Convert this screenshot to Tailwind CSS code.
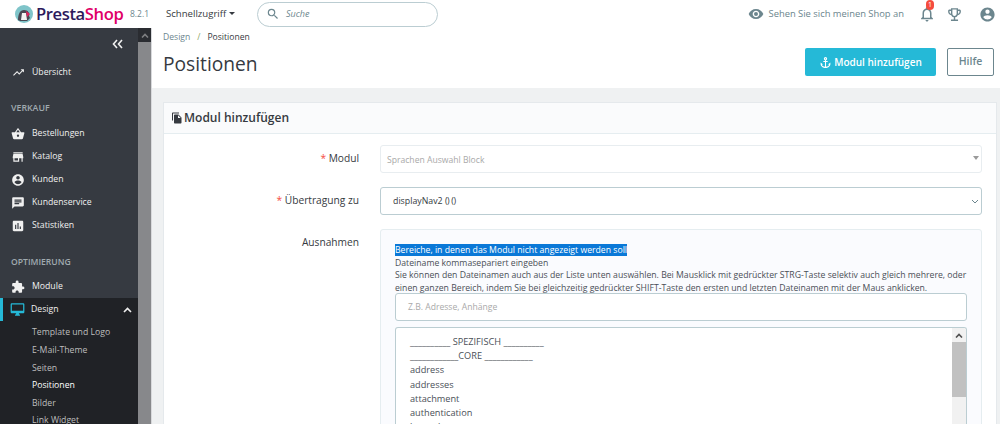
<!DOCTYPE html>
<html lang="de">
<head>
  <meta charset="UTF-8">
  <title>Positionen</title>
  <script src="https://cdn.jsdelivr.net/npm/@tailwindcss/browser@4"></script>
</head>
<body class="h-[424px] w-[1000px] overflow-hidden bg-white font-['Open_Sans',sans-serif] text-[#363a41]">
  <!-- top bar -->
  <header class="flex h-[28px] items-center">
    <div class="flex w-[163px] items-center pl-[15px]">
      <svg class="h-[18px] w-[18px] shrink-0" viewBox="0 0 18 18">
        <circle cx="9" cy="9" r="9" fill="#7fc4c9"/>
        <path d="M3 15c0-6 2-10 6-10s6 3 5 6l1 2-3 3H5z" fill="#4a4a55"/>
        <path d="M7 8h4l1 7H6z" fill="#f4f4f4"/>
        <path d="M11 6l4 3-3 3z" fill="#e0245e"/>
      </svg>
      <span class="ml-[3px] w-[91px] text-[16.6px] leading-[28px] font-semibold tracking-[-0.4px] whitespace-nowrap"><span class="text-[#2d1a5c]">Presta</span><span class="text-[#df0067]">Shop</span></span>
      <span class="ml-[3px] text-[8.5px] whitespace-nowrap text-[#6c868e]">8.2.1</span>
    </div>
    <div class="ml-[3px] flex w-[91px] items-center text-[9.6px] text-[#363a41]">
      <span>Schnellzugriff</span>
      <span class="ml-[3px] h-0 w-0 border-x-[3.5px] border-t-[3.5px] border-x-transparent border-t-[#363a41]"></span>
    </div>
    <div class="flex h-[25px] w-[181px] items-center rounded-full border border-[#bbcdd2] pl-[8px]">
      <svg class="h-[14px] w-[14px] text-[#6c868e]" viewBox="0 0 24 24" fill="currentColor"><path d="M15.5 14h-.79l-.28-.27A6.47 6.47 0 0 0 16 9.5 6.5 6.5 0 1 0 9.5 16c1.61 0 3.09-.59 4.23-1.57l.27.28v.79l5 4.99L20.49 19zm-6 0C7.01 14 5 11.99 5 9.5S7.01 5 9.5 5 14 7.01 14 9.5 11.99 14 9.5 14z"/></svg>
      <span class="ml-[6px] text-[9px] text-[#6c868e] italic">Suche</span>
    </div>
    <div class="ml-auto flex items-center pr-[4px]">
      <svg class="h-[16px] w-[16px] text-[#6c868e]" viewBox="0 0 24 24" fill="currentColor"><path d="M12 4.5C7 4.5 2.73 7.61 1 12c1.73 4.39 6 7.5 11 7.5s9.27-3.11 11-7.5c-1.73-4.39-6-7.5-11-7.5zM12 17c-2.76 0-5-2.24-5-5s2.24-5 5-5 5 2.24 5 5-2.24 5-5 5zm0-8a3 3 0 1 0 0 6 3 3 0 0 0 0-6z"/></svg>
      <span class="ml-[5px] text-[9.4px] whitespace-nowrap text-[#6c868e]">Sehen Sie sich meinen Shop an</span>
      <div class="relative ml-[14px] h-[18px] w-[18px]">
        <svg class="h-[18px] w-[18px] text-[#6c868e]" viewBox="0 0 24 24" fill="currentColor"><path d="M12 22c1.1 0 2-.9 2-2h-4c0 1.1.9 2 2 2zm6-6v-5c0-3.07-1.63-5.64-4.5-6.32V4c0-.83-.67-1.5-1.5-1.5s-1.5.67-1.5 1.5v.68C7.64 5.36 6 7.92 6 11v5l-2 2v1h16v-1l-2-2zm-2 1H8v-6c0-2.48 1.51-4.5 4-4.5s4 2.02 4 4.5v6z"/></svg>
        <span class="absolute top-[-5px] left-[8px] flex h-[10px] w-[8px] items-center justify-center rounded-full bg-[#f54c3e] text-[7px] text-white">1</span>
      </div>
      <svg class="ml-[10px] h-[17px] w-[17px] text-[#6c868e]" viewBox="0 0 24 24" fill="currentColor"><path d="M19 5h-2V3H7v2H5c-1.1 0-2 .9-2 2v1c0 2.55 1.92 4.63 4.39 4.94A5.01 5.01 0 0 0 11 15.9V19H7v2h10v-2h-4v-3.1a5.01 5.01 0 0 0 3.61-2.96C19.08 12.63 21 10.55 21 8V7c0-1.1-.9-2-2-2zM5 8V7h2v3.82C5.84 10.4 5 9.3 5 8zm7 6c-1.65 0-3-1.35-3-3V5h6v6c0 1.65-1.35 3-3 3zm7-6c0 1.3-.84 2.4-2 2.82V7h2v1z"/></svg>
      <svg class="ml-[16px] h-[17px] w-[17px] text-[#6c868e]" viewBox="0 0 24 24" fill="currentColor"><path d="M12 2C6.48 2 2 6.48 2 12s4.48 10 10 10 10-4.48 10-10S17.52 2 12 2zm0 3c1.66 0 3 1.34 3 3s-1.34 3-3 3-3-1.34-3-3 1.34-3 3-3zm0 14.2a7.2 7.2 0 0 1-6-3.22c.03-1.99 4-3.08 6-3.08s5.97 1.09 6 3.08a7.2 7.2 0 0 1-6 3.22z"/></svg>
    </div>
  </header>

  <div class="flex h-[396px]">
    <!-- sidebar -->
    <nav class="h-full w-[138px] shrink-0 overflow-hidden bg-[#363a41] text-[8.7px] text-[#f0f0f0]">
      <div class="flex h-[31px] justify-end pt-[11px] pr-[15px]">
        <svg class="h-[10px] w-[11px]" viewBox="0 0 11 10" fill="none" stroke="currentColor" stroke-width="1.6"><path d="M5 1 1.5 5 5 9M10 1 6.5 5 10 9"/></svg>
      </div>
      <a class="flex h-[27px] items-center pl-[12px]">
        <svg class="h-[13px] w-[13px]" viewBox="0 0 24 24" fill="currentColor"><path d="m16 6 2.29 2.29-4.88 4.88-4-4L2 16.59 3.41 18l6-6 4 4 6.3-6.29L22 12V6z"/></svg>
        <span class="ml-[7px]">Übersicht</span>
      </a>
      <div class="mt-[15px] h-[15px] pl-[11px] text-[8.8px] leading-[15px] font-semibold text-[#a0aab0]">VERKAUF</div>
      <div class="mt-[6px]">
        <a class="flex h-[23px] items-center pl-[11px]">
          <svg class="h-[14px] w-[14px]" viewBox="0 0 24 24" fill="currentColor"><path d="M17.21 9l-4.38-6.56a1 1 0 0 0-1.66 0L6.79 9H2c-.55 0-1 .45-1 1l.04.27 2.54 9.27C3.81 20.38 4.58 21 5.5 21h13c.92 0 1.69-.62 1.93-1.46l2.54-9.27L23 10c0-.55-.45-1-1-1h-4.79zM9 9l3-4.4L15 9H9zm3 8a2 2 0 1 1 0-4 2 2 0 0 1 0 4z"/></svg>
          <span class="ml-[7px]">Bestellungen</span>
        </a>
        <a class="flex h-[23px] items-center pl-[11px]">
          <svg class="h-[14px] w-[14px]" viewBox="0 0 24 24" fill="currentColor"><path d="M20 4H4v2h16V4zm1 10v-2l-1-5H4l-1 5v2h1v6h10v-6h4v6h2v-6h1zm-9 4H6v-4h6v4z"/></svg>
          <span class="ml-[7px]">Katalog</span>
        </a>
        <a class="flex h-[23px] items-center pl-[11px]">
          <svg class="h-[14px] w-[14px]" viewBox="0 0 24 24" fill="currentColor"><path d="M12 2C6.48 2 2 6.48 2 12s4.48 10 10 10 10-4.48 10-10S17.52 2 12 2zm0 3c1.66 0 3 1.34 3 3s-1.34 3-3 3-3-1.34-3-3 1.34-3 3-3zm0 14.2a7.2 7.2 0 0 1-6-3.22c.03-1.99 4-3.08 6-3.08s5.97 1.09 6 3.08a7.2 7.2 0 0 1-6 3.22z"/></svg>
          <span class="ml-[7px]">Kunden</span>
        </a>
        <a class="flex h-[23px] items-center pl-[11px]">
          <svg class="h-[14px] w-[14px]" viewBox="0 0 24 24" fill="currentColor"><path d="M20 2H4c-1.1 0-1.99.9-1.99 2L2 22l4-4h14c1.1 0 2-.9 2-2V4c0-1.1-.9-2-2-2zM6 9h12v2H6V9zm8 5H6v-2h8v2zm4-6H6V6h12v2z"/></svg>
          <span class="ml-[7px]">Kundenservice</span>
        </a>
        <a class="flex h-[23px] items-center pl-[11px]">
          <svg class="h-[14px] w-[14px]" viewBox="0 0 24 24" fill="currentColor"><path d="M19 3H5c-1.1 0-2 .9-2 2v14c0 1.1.9 2 2 2h14c1.1 0 2-.9 2-2V5c0-1.1-.9-2-2-2zM9 17H7v-7h2v7zm4 0h-2V7h2v10zm4 0h-2v-4h2v4z"/></svg>
          <span class="ml-[7px]">Statistiken</span>
        </a>
      </div>
      <div class="mt-[18px] h-[15px] pl-[11px] text-[8.6px] leading-[15px] font-semibold text-[#a0aab0]">OPTIMIERUNG</div>
      <a class="mt-[5px] flex h-[23px] items-center pl-[11px]">
        <svg class="h-[14px] w-[14px]" viewBox="0 0 24 24" fill="currentColor"><path d="M20.5 11H19V7c0-1.1-.9-2-2-2h-4V3.5a2.5 2.5 0 0 0-5 0V5H4c-1.1 0-1.99.9-1.99 2v3.8H3.5c1.49 0 2.7 1.21 2.7 2.7s-1.21 2.7-2.7 2.7H2V20c0 1.1.9 2 2 2h3.8v-1.5c0-1.49 1.21-2.7 2.7-2.7s2.7 1.21 2.7 2.7V22H17c1.1 0 2-.9 2-2v-4h1.5a2.5 2.5 0 0 0 0-5z"/></svg>
        <span class="ml-[7px]">Module</span>
      </a>
      <div class="h-[130px] bg-[#202226]">
        <a class="flex h-[23px] items-center border-l-[3px] border-[#25b9d7] pl-[7px]">
          <svg class="h-[15px] w-[15px] text-[#25b9d7]" viewBox="0 0 24 24" fill="currentColor"><path d="M21 2H3c-1.1 0-2 .9-2 2v12c0 1.1.9 2 2 2h7l-2 3v1h8v-1l-2-3h7c1.1 0 2-.9 2-2V4c0-1.1-.9-2-2-2zm0 12H3V4h18v10z"/></svg>
          <span class="ml-[6px]">Design</span>
          <svg class="mr-[6px] ml-auto h-[8px] w-[9px]" viewBox="0 0 9 8" fill="none" stroke="currentColor" stroke-width="1.6"><path d="M1 6l3.5-3.5L8 6"/></svg>
        </a>
        <ul class="pt-[3px] pl-[32px] text-[#bebebe]">
          <li class="h-[18px] leading-[17px]">Template und Logo</li>
          <li class="h-[18px] leading-[17px]">E-Mail-Theme</li>
          <li class="h-[17px] leading-[17px]">Seiten</li>
          <li class="h-[18px] leading-[17px] text-white">Positionen</li>
          <li class="h-[17px] leading-[17px]">Bilder</li>
          <li class="h-[18px] leading-[17px]">Link Widget</li>
        </ul>
      </div>
    </nav>
    <!-- sidebar scrollbar -->
    <div class="flex h-full w-[13px] shrink-0 flex-col bg-[#87888b]">
      <div class="flex h-[14px] items-center justify-center bg-[#2a2c31]">
        <svg class="h-[5px] w-[8px] text-[#7d7e81]" viewBox="0 0 8 5" fill="none" stroke="currentColor" stroke-width="1.6"><path d="M1 4.5 4 1.5l3 3"/></svg>
      </div>
    </div>

    <!-- content -->
    <main class="h-full min-w-0 flex-1 overflow-hidden border-l border-[#d8d9dc] bg-[#eff1f2]">
      <div class="h-[60px] bg-white pl-[11px]">
        <div class="flex h-[19px] items-center text-[8.6px]">
          <span class="text-[#6c868e]">Design</span>
          <span class="mx-[7px] text-[#8fa86a]">/</span>
          <span class="text-[#363a41]">Positionen</span>
        </div>
        <div class="flex items-start justify-between pr-[6px]">
          <h1 class="mt-[2px] text-[19.2px] leading-[30px] text-[#363a41]">Positionen</h1>
          <div class="mt-[1px] flex">
            <a class="flex h-[28px] w-[131px] items-center justify-center rounded-[2px] bg-[#25b9d7] text-[10px] font-semibold text-white">
              <svg class="mr-[2px] h-[13px] w-[13px]" viewBox="0 0 24 24" fill="currentColor"><path d="M17 15l1.55 1.55c-.96 1.69-3.33 3.04-5.55 3.37V11h3V9h-3V7.82C14.16 7.4 15 6.3 15 5c0-1.65-1.35-3-3-3S9 3.35 9 5c0 1.3.84 2.4 2 2.82V9H8v2h3v8.92c-2.22-.33-4.59-1.68-5.55-3.37L7 15l-4-3v3c0 3.88 4.92 7 9 7s9-3.12 9-7v-3l-4 3zM12 4c.55 0 1 .45 1 1s-.45 1-1 1-1-.45-1-1 .45-1 1-1z"/></svg>
              Modul hinzufügen
            </a>
            <a class="ml-[11px] flex h-[28px] w-[47px] items-center justify-center rounded-[2px] border border-[#6c868e] bg-white text-[10.5px] font-semibold text-[#6c868e]">Hilfe</a>
          </div>
        </div>
      </div>

      <section class="mt-[14px] ml-[11px] w-[834px] border border-[#e5e9ec] bg-white">
        <div class="flex h-[31px] items-center border-b border-[#e5edf0] bg-[#fafbfc] pl-[7px]">
          <svg class="h-[12px] w-[12px] text-[#363a41]" viewBox="0 0 24 24" fill="currentColor"><path d="M16 1H4c-1.1 0-2 .9-2 2v14h2V3h12V1zm-1 4H8c-1.1 0-2 .9-2 2v14c0 1.1.9 2 2 2h11c1.1 0 2-.9 2-2V11l-6-6zm-1 7V6.5l5.5 5.5H14z"/></svg>
          <h3 class="ml-[1px] text-[12px] font-semibold text-[#363a41]">Modul hinzufügen</h3>
        </div>
        <div class="grid grid-cols-[195px_602px] gap-x-[21px] gap-y-[14px] pt-[11px]">
          <label class="pt-[5px] text-right text-[10.2px] leading-[16px]"><span class="text-[#f54c3e]">* </span>Modul</label>
          <div class="relative flex h-[28px] items-center rounded-[3px] border border-[#e8edf0] bg-white pt-[2px] pl-[6px] text-[8.6px] text-[#a9a9a9]">
            Sprachen Auswahl Block
            <span class="absolute top-[10px] right-[2px] h-0 w-0 border-x-[3.5px] border-t-[4px] border-x-transparent border-t-[#9a9a9a]"></span>
          </div>
          <label class="pt-[5px] text-right text-[10.2px] leading-[16px]"><span class="text-[#f54c3e]">* </span>Übertragung zu</label>
          <div class="relative flex h-[28px] items-center rounded-[3px] border border-[#bbcdd2] bg-white pt-[1px] pl-[12px] text-[8.8px] text-[#363a41]">
            <span>displayNav2 <span class="tracking-[-0.4px]">() ()</span></span>
            <svg class="absolute top-[11px] right-[2px] h-[5px] w-[8px] text-[#6c868e]" viewBox="0 0 8 5" fill="none" stroke="currentColor" stroke-width="1"><path d="M1 1l3 3 3-3"/></svg>
          </div>
          <label class="pt-[5px] text-right text-[10.2px] leading-[16px]">Ausnahmen</label>
          <div class="h-[300px] rounded-t-[3px] border border-[#e5edf0] bg-[#fafbfe] px-[14px] pt-[14px]">
            <div class="text-[8.68px] leading-[12.5px] whitespace-nowrap text-[#4a4f57]">
              <p><span class="bg-[#0a78d7] text-white">Bereiche, in denen das Modul nicht angezeigt werden soll</span></p>
              <p>Dateiname kommasepariert eingeben</p>
              <p>Sie können den Dateinamen auch aus der Liste unten auswählen. Bei Mausklick mit gedrückter STRG-Taste selektiv auch gleich mehrere, oder</p>
              <p>einen ganzen Bereich, indem Sie bei gleichzeitig gedrückter SHIFT-Taste den ersten und letzten Dateinamen mit der Maus anklicken.</p>
            </div>
            <div class="mt-[-1px] flex h-[28px] items-center rounded-[3px] border border-[#bbcdd2] bg-white pl-[12px] text-[8.6px] text-[#a9a9a9]">Z.B. Adresse, Anhänge</div>
            <div class="mt-[6px] flex h-[97px] overflow-hidden rounded-t-[3px] border border-b-0 border-[#bbcdd2] bg-white">
              <ul class="flex-1 pt-[7px] pl-[14px] text-[9.2px] leading-[14.2px] text-[#4a4f57]">
                <li>__________ SPEZIFISCH __________</li>
                <li>____________CORE ____________</li>
                <li>address</li>
                <li>addresses</li>
                <li>attachment</li>
                <li>authentication</li>
                <li>bestsales</li>
              </ul>
              <div class="flex w-[14px] flex-col bg-[#f1f1f1]">
                <div class="flex h-[14px] items-center justify-center">
                  <svg class="h-[5px] w-[8px] text-[#505050]" viewBox="0 0 8 5" fill="none" stroke="currentColor" stroke-width="1.6"><path d="M1 4.5 4 1.5l3 3"/></svg>
                </div>
                <div class="h-[55px] bg-[#c1c1c1]"></div>
              </div>
            </div>
          </div>
        </div>
      </section>
    </main>
  </div>
</body>
</html>
